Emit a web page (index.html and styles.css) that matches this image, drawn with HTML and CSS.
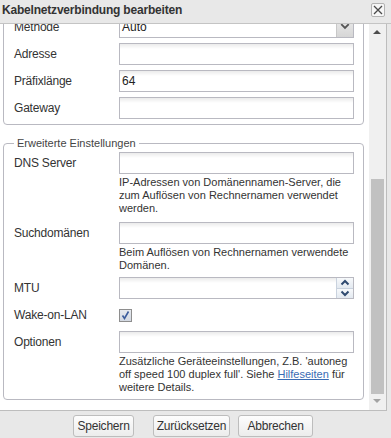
FILE: index.html
```html
<!DOCTYPE html>
<html lang="de">
<head>
<meta charset="utf-8">
<title>Kabelnetzverbindung bearbeiten</title>
<link rel="stylesheet" href="styles.css">
</head>
<body>
<div class="dialog">
  <div class="titlebar">
    <span class="title">Kabelnetzverbindung bearbeiten</span>
    <span class="close"><svg width="12" height="12" viewBox="0 0 12 12"><path d="M2 2 L10 10 M10 2 L2 10" stroke="#4a4a4a" stroke-width="1.3" fill="none"/></svg></span>
  </div>
  <div class="body">
    <div class="viewport">
      <fieldset class="group group-main">
        <div class="row">
          <label class="lbl">Methode</label>
          <div class="field">
            <div class="select"><span class="sel-value">Auto</span><span class="trigger"><svg width="17" height="21" viewBox="0 0 17 21"><path d="M4.5 7 L8.5 11 L12.5 7" stroke="#555" stroke-width="2" fill="none"/></svg></span></div>
          </div>
        </div>
        <div class="row">
          <label class="lbl">Adresse</label>
          <div class="field"><input class="txt" type="text" value=""></div>
        </div>
        <div class="row">
          <label class="lbl">Präfixlänge</label>
          <div class="field"><input class="txt" type="text" value="64"></div>
        </div>
        <div class="row">
          <label class="lbl">Gateway</label>
          <div class="field"><input class="txt" type="text" value=""></div>
        </div>
      </fieldset>
      <fieldset class="group group-adv">
        <legend class="legend">Erweiterte Einstellungen</legend>
        <div class="row row-dns">
          <label class="lbl">DNS Server</label>
          <div class="field">
            <input class="txt" type="text" value="">
            <div class="help">IP-Adressen von Domänennamen-Server, die<br>zum Auflösen von Rechnernamen verwendet<br>werden.</div>
          </div>
        </div>
        <div class="row">
          <label class="lbl">Suchdomänen</label>
          <div class="field">
            <input class="txt" type="text" value="">
            <div class="help">Beim Auflösen von Rechnernamen verwendete<br>Domänen.</div>
          </div>
        </div>
        <div class="row">
          <label class="lbl">MTU</label>
          <div class="field">
            <div class="spin-wrap">
              <input class="txt txt-spin" type="text" value="">
              <span class="spinner">
                <span class="spin-btn"><svg width="16" height="9" viewBox="0 0 16 9"><path d="M4.5 6.5 L8 3 L11.5 6.5" stroke="#2f4a70" stroke-width="2" fill="none"/></svg></span>
                <span class="spin-btn spin-down"><svg width="16" height="9" viewBox="0 0 16 9"><path d="M4.5 2.5 L8 6 L11.5 2.5" stroke="#2f4a70" stroke-width="2" fill="none"/></svg></span>
              </span>
            </div>
          </div>
        </div>
        <div class="row">
          <label class="lbl">Wake-on-LAN</label>
          <div class="field field-check">
            <span class="check"><svg width="11" height="11" viewBox="0 0 11 11"><path d="M2.5 5.5 L4.5 8.5 L8.5 1.5" stroke="#3b5c9c" stroke-width="1.6" fill="none"/></svg></span>
          </div>
        </div>
        <div class="row">
          <label class="lbl">Optionen</label>
          <div class="field">
            <input class="txt" type="text" value="">
            <div class="help">Zusätzliche Geräteeinstellungen, Z.B. 'autoneg<br>off speed 100 duplex full'. Siehe <a class="link" href="#">Hilfeseiten</a> für<br>weitere Details.</div>
          </div>
        </div>
      </fieldset>
    </div>
    <div class="scrollbar">
      <span class="sb-btn sb-up"><svg width="17" height="17" viewBox="0 0 17 17"><path d="M4 10 L8 6 L12 10 Z" fill="#4d4d4d"/></svg></span>
      <span class="sb-track"><span class="sb-thumb"></span></span>
      <span class="sb-btn sb-down"><svg width="17" height="16" viewBox="0 0 17 16"><path d="M4 5 L8 9 L12 5 Z" fill="#a3a3a3"/></svg></span>
    </div>
  </div>
  <div class="footer">
    <button class="btn btn-save" type="button">Speichern</button>
    <button class="btn btn-reset" type="button">Zurücksetzen</button>
    <button class="btn btn-cancel" type="button">Abbrechen</button>
  </div>
</div>
</body>
</html>
```

FILE: styles.css
```css
* { box-sizing: border-box; }

html, body {
  margin: 0;
  padding: 0;
}

body {
  width: 391px;
  height: 438px;
  overflow: hidden;
  background: #e8e8e8;
  font-family: "Liberation Sans", Arial, sans-serif;
  color: #333;
}

.dialog {
  display: flex;
  flex-direction: column;
  height: 438px;
}

.titlebar {
  height: 24px;
  flex: none;
  border-bottom: 1px solid #c4c4c4;
  display: flex;
  align-items: flex-start;
  justify-content: space-between;
  padding: 3px 6px 0 2px;
}

.title {
  font-weight: bold;
  font-size: 12px;
  line-height: 14px;
  letter-spacing: -0.2px;
  color: #333;
}

.close {
  width: 14px;
  height: 14px;
  border: 1px solid #b3b3b3;
  border-radius: 2px;
  background: #f6f6f6;
  display: flex;
  align-items: center;
  justify-content: center;
}

.body {
  height: 387px;
  flex: none;
  display: flex;
  background: #fff;
  border-right: 1px solid #bdbdbd;
  border-bottom: 1px solid #bdbdbd;
  margin-right: 4px;
}

.viewport {
  flex: 1;
  overflow: hidden;
}

.group {
  margin: 0 5px 0 3px;
  border: 1px solid #b9b9c1;
  border-radius: 4px;
  min-width: 0;
}

.group-main {
  /* content is scrolled 14px down */
  margin-top: -14px;
  padding: 5px 9px 0 10px;
}

.group-adv {
  margin-top: 12px;
  padding: 2px 9px 0 10px;
}

.legend {
  padding: 0 3px;
  font-size: 11px;
  line-height: 13px;
  color: #444;
}

.row {
  display: flex;
  align-items: flex-start;
  margin-bottom: 5px;
}

.row-dns {
  margin-bottom: 7px;
}

.lbl {
  width: 105px;
  flex: none;
  font-size: 12px;
  line-height: 22px;
  letter-spacing: -0.2px;
  color: #333;
}

.field {
  width: 235px;
  flex: none;
}

.field-check {
  height: 22px;
  display: flex;
  align-items: center;
}

.txt {
  display: block;
  width: 235px;
  height: 22px;
  margin: 0;
  padding: 0 2px;
  border: 1px solid #b9b9c1;
  border-radius: 0;
  background: linear-gradient(#ebebeb, #ffffff 5px);
  font-family: "Liberation Sans", Arial, sans-serif;
  font-size: 12px;
  color: #222;
  outline: none;
}

.select {
  height: 22px;
  display: flex;
  border: 1px solid #b9b9c1;
  background: #fff;
}

.sel-value {
  flex: 1;
  font-size: 12px;
  line-height: 20px;
  padding-left: 2px;
  color: #222;
}

.trigger {
  width: 17px;
  height: 20px;
  background: linear-gradient(#ececec, #d6d6d6);
  border-left: 1px solid #c8c8c8;
  display: flex;
}

.spin-wrap {
  position: relative;
}

.spinner {
  position: absolute;
  top: 1px;
  right: 1px;
  width: 17px;
  height: 20px;
  display: flex;
  flex-direction: column;
  border-left: 1px solid #c9d2de;
}

.spin-btn {
  height: 10px;
  display: flex;
  background: linear-gradient(#f7f9fb, #e3e9f0);
}

.spin-down {
  border-top: 1px solid #c9d2de;
  height: 10px;
}

.check {
  width: 13px;
  height: 13px;
  border: 1px solid #8e8e8e;
  background: linear-gradient(#e6e9ee, #d3d9e2);
  display: flex;
  align-items: center;
  justify-content: center;
}

.help {
  margin-top: 2px;
  font-size: 11px;
  line-height: 13px;
  color: #333;
  white-space: nowrap;
}

.link {
  color: #3a6cb4;
  text-decoration: underline;
}

.scrollbar {
  width: 17px;
  flex: none;
  background: #f0f0f0;
  display: flex;
  flex-direction: column;
}

.sb-btn {
  display: flex;
  flex: none;
}

.sb-up { height: 17px; }
.sb-down { height: 16px; }

.sb-track {
  flex: 1;
  display: flex;
  flex-direction: column;
  padding: 138px 2px 0 2px;
}

.sb-thumb {
  flex: 1;
  background: #c1c1c1;
}

.footer {
  flex: 1;
  display: flex;
  align-items: flex-start;
  padding: 4px 0 0 73px;
}

.btn {
  height: 22px;
  margin: 0;
  padding: 0;
  border: 1px solid #bdbdbd;
  border-radius: 3px;
  background: linear-gradient(#fdfdfd, #ececec);
  font-family: "Liberation Sans", Arial, sans-serif;
  font-size: 12px;
  letter-spacing: -0.2px;
  color: #333;
}

.btn-save { width: 61px; margin-right: 19px; }
.btn-reset { width: 77px; margin-right: 8px; }
.btn-cancel { width: 75px; }
```
